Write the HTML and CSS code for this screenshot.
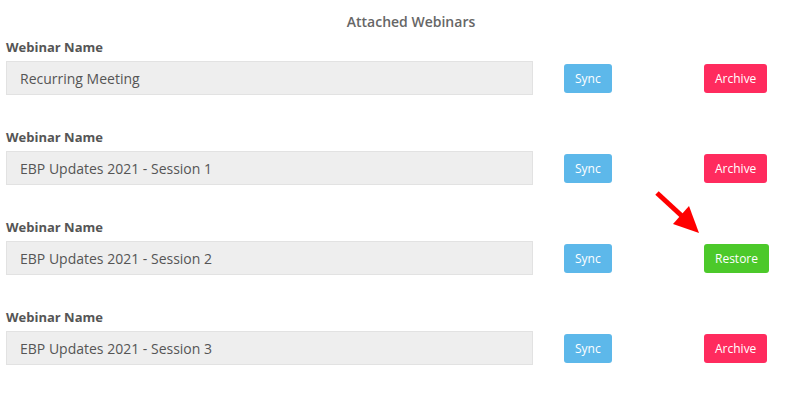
FILE: index.html
```html
<!DOCTYPE html>
<html lang="en">
<head>
    <meta charset="UTF-8">
    <title>Attached Webinars</title>
    <link rel="stylesheet" href="styles.css">
</head>
<body>
    <div class="webinars">
        <h2 class="title">Attached Webinars</h2>

        <div class="webinar">
            <label class="webinar-label">Webinar Name</label>
            <div class="webinar-row">
                <input class="webinar-input" type="text" value="Recurring Meeting" readonly>
                <div class="cell sync-cell"><button class="btn btn-sync">Sync</button></div>
                <div class="cell"><button class="btn btn-archive">Archive</button></div>
            </div>
        </div>

        <div class="webinar">
            <label class="webinar-label">Webinar Name</label>
            <div class="webinar-row">
                <input class="webinar-input" type="text" value="EBP Updates 2021 - Session 1" readonly>
                <div class="cell sync-cell"><button class="btn btn-sync">Sync</button></div>
                <div class="cell"><button class="btn btn-archive">Archive</button></div>
            </div>
        </div>

        <div class="webinar">
            <label class="webinar-label">Webinar Name</label>
            <div class="webinar-row">
                <input class="webinar-input" type="text" value="EBP Updates 2021 - Session 2" readonly>
                <div class="cell sync-cell"><button class="btn btn-sync">Sync</button></div>
                <div class="cell restore-cell">
                    <svg class="pointer" width="50" height="50" viewBox="0 0 50 50">
                        <line x1="3" y1="4" x2="29" y2="28" stroke="#ff0000" stroke-width="5"/>
                        <polygon points="45,44 19,35 35,17" fill="#ff0000"/>
                    </svg>
                    <button class="btn btn-restore">Restore</button>
                </div>
            </div>
        </div>

        <div class="webinar">
            <label class="webinar-label">Webinar Name</label>
            <div class="webinar-row">
                <input class="webinar-input" type="text" value="EBP Updates 2021 - Session 3" readonly>
                <div class="cell sync-cell"><button class="btn btn-sync">Sync</button></div>
                <div class="cell"><button class="btn btn-archive">Archive</button></div>
            </div>
        </div>
    </div>
</body>
</html>
```

FILE: styles.css
```css
:root {
    --color-text: #555555;
    --color-sync: #5db8ea;
    --color-archive: #ff2b5e;
    --color-restore: #4cc92a;
    --input-bg: #eeeeee;
    --input-border: #e2e2e2;
}

body {
    font-family: 'Open Sans', 'Noto Sans', sans-serif;
    margin: 0;
    padding: 12px 6px 0;
    background: #ffffff;
    color: var(--color-text);
}

.title {
    margin: 0 0 6px;
    padding-left: 32px;
    text-align: center;
    font-size: 14px;
    line-height: 20px;
    font-weight: 600;
    color: #666666;
}

.webinar {
    margin-bottom: 33px;
}

.webinar-label {
    display: block;
    font-size: 13px;
    line-height: 18px;
    font-weight: 700;
    margin-bottom: 5px;
}

.webinar-row {
    display: grid;
    grid-template-columns: 527px 171px auto;
    align-items: center;
}

.webinar-input {
    box-sizing: border-box;
    width: 100%;
    height: 34px;
    margin: 0;
    padding: 0 13px;
    background: var(--input-bg);
    border: 1px solid var(--input-border);
    border-radius: 0;
    font-family: inherit;
    font-size: 14px;
    color: var(--color-text);
    outline: none;
}

.sync-cell {
    padding-left: 31px;
}

.restore-cell {
    position: relative;
}

.pointer {
    position: absolute;
    left: -50px;
    top: -55px;
}

.btn {
    height: 29px;
    padding: 0 11px;
    border: none;
    border-radius: 3px;
    font-family: inherit;
    font-size: 12px;
    color: #ffffff;
    cursor: pointer;
}

.btn-sync {
    background: var(--color-sync);
}

.btn-archive {
    background: var(--color-archive);
}

.btn-restore {
    background: var(--color-restore);
}
```
